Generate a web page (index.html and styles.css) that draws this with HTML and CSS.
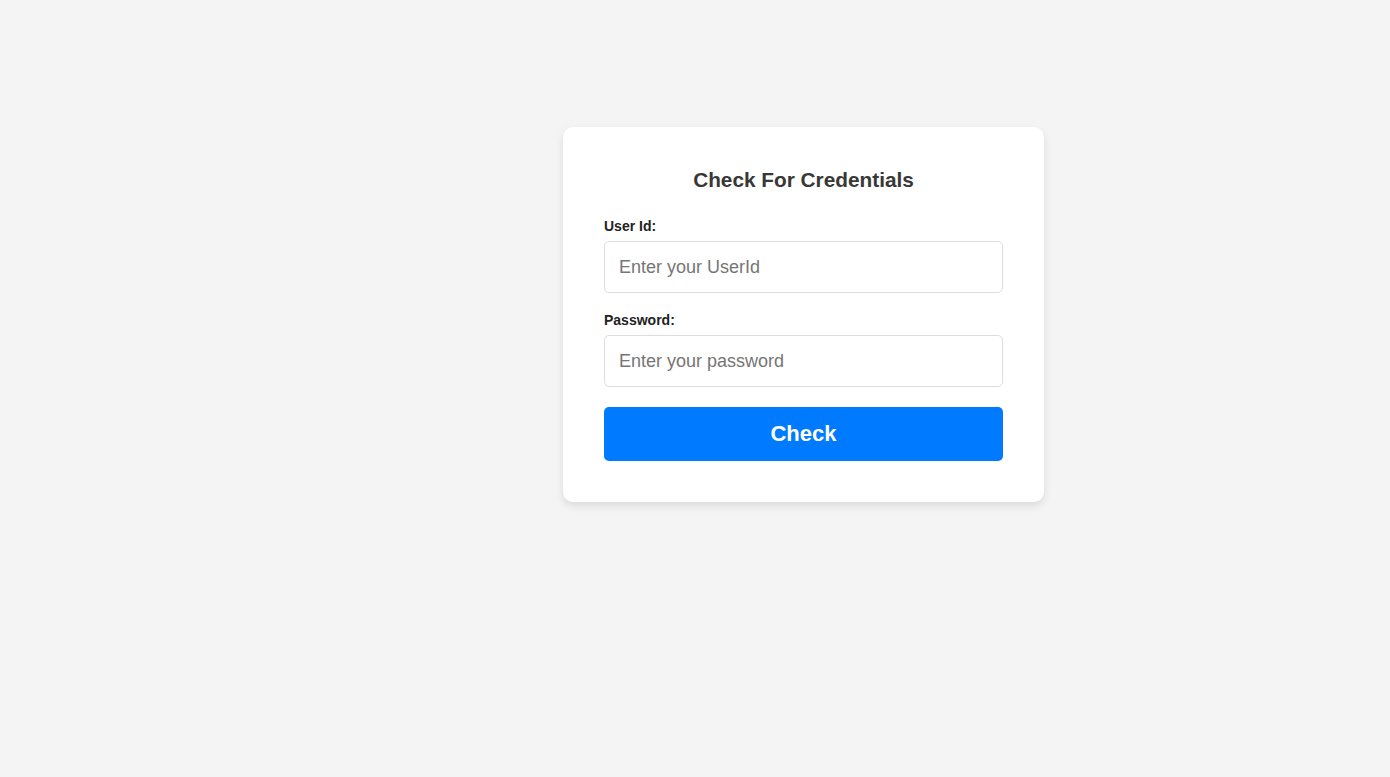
FILE: index.html
```html
<!DOCTYPE html>
<html lang="en">
<head>
<meta charset="utf-8">
<title>Check For Credentials</title>
<link rel="stylesheet" href="styles.css">
</head>
<body>
<main class="page">
  <form class="card">
    <h2 class="title">Check For Credentials</h2>
    <div class="group">
      <label class="label" for="userid">User Id:</label>
      <input class="input" id="userid" type="text" placeholder="Enter your UserId">
    </div>
    <div class="group">
      <label class="label" for="password">Password:</label>
      <input class="input" id="password" type="password" placeholder="Enter your password">
    </div>
    <button class="button" type="button">Check</button>
  </form>
</main>
</body>
</html>
```

FILE: styles.css
```css
html, body {
  margin: 0;
  padding: 0;
}
body {
  background: #f4f4f4;
  font-family: "Liberation Sans", Arial, sans-serif;
  min-height: 777px;
}
.page {
  padding-top: 127px;
  padding-left: 563px;
}
.card {
  box-sizing: border-box;
  width: 481px;
  padding: 41px 41px 41px 41px;
  background: #fff;
  border-radius: 10px;
  box-shadow: 0 4px 8px rgba(0, 0, 0, 0.1);
  display: flex;
  flex-direction: column;
}
.title {
  margin: 0 0 26px 0;
  font-size: 20.8px;
  line-height: 24px;
  font-weight: bold;
  color: #383838;
  text-align: center;
}
.group {
  display: flex;
  flex-direction: column;
  margin-bottom: 19px;
}
.group + .group {
  margin-bottom: 20px;
}
.label {
  font-size: 14px;
  line-height: 16px;
  font-weight: bold;
  color: #222;
  margin-bottom: 7px;
}
.input {
  box-sizing: border-box;
  width: 100%;
  height: 52px;
  padding: 0 14px;
  border: 1px solid #ddd;
  border-radius: 5px;
  font-family: "Liberation Sans", Arial, sans-serif;
  font-size: 18px;
  color: #333;
  background: #fff;
  outline: none;
}
.input::placeholder {
  color: #757575;
}
.button {
  height: 54px;
  border: none;
  border-radius: 5px;
  background: #007bff;
  color: #fff;
  font-family: "Liberation Sans", Arial, sans-serif;
  font-size: 22px;
  font-weight: bold;
  cursor: pointer;
}
```
